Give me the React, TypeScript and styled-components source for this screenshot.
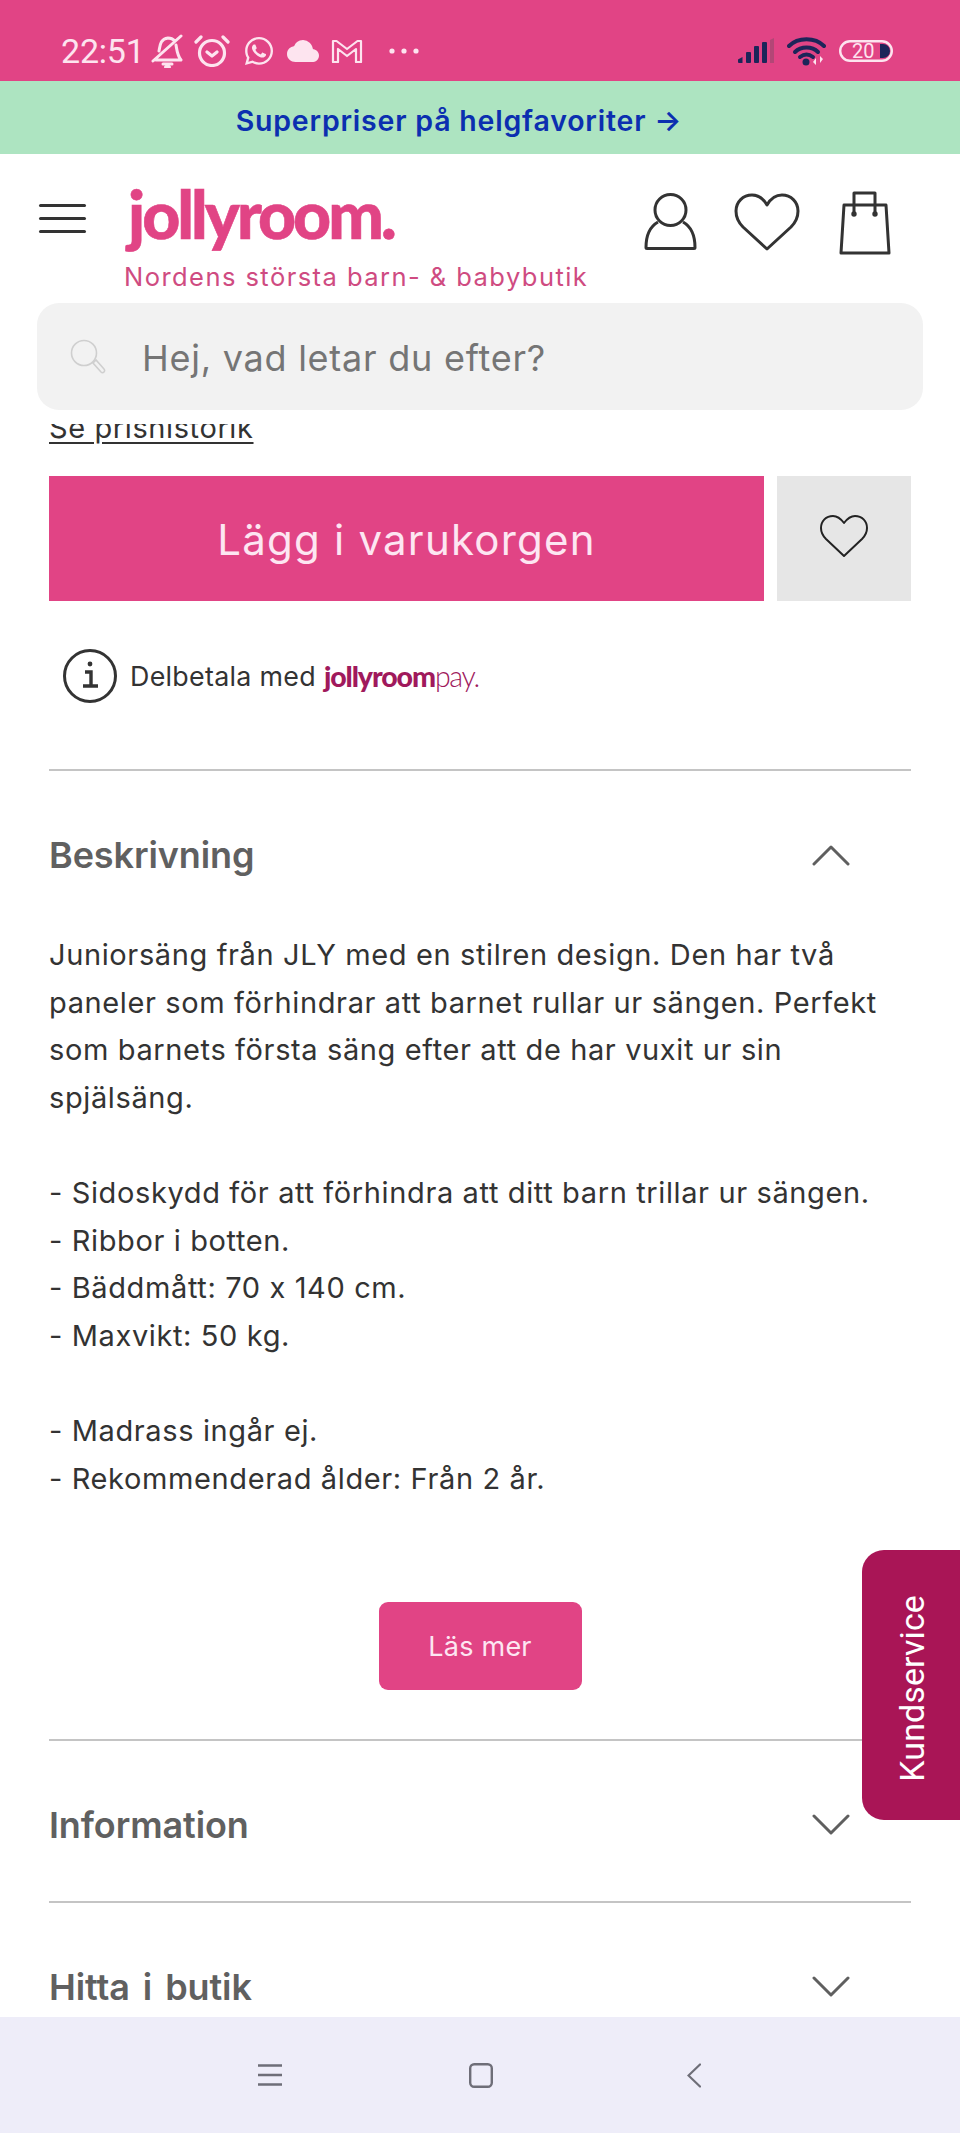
import React from "react";
import styled, { createGlobalStyle } from "styled-components";
import { FaWhatsapp } from "react-icons/fa";
import { IoCloud } from "react-icons/io5";

const Global = createGlobalStyle`
  html, body { margin: 0; padding: 0; background: #fff; }
  * { box-sizing: border-box; }
`;
const pink = "#e14485";
const body = `"Inter", "Liberation Sans", sans-serif`;

const Page = styled.div`
  position: relative; width: 960px; height: 2133px; overflow: hidden;
  display: flex; flex-direction: column; background: #fff; font-family: ${body};
`;
const StatusBar = styled.div`
  height: 81px; flex: none; background: ${pink}; display: flex; align-items: center;
  padding: 22px 67px 0 61px; color: #fde4ef;
`;
const Time = styled.span`
  font-family: Roboto, sans-serif; font-size: 34px; line-height: 1; width: 85px; margin-top: -2px; letter-spacing: -0.2px;
`;
const StatusIcons = styled.div`
  display: flex; align-items: center; margin-top: -2px; flex: 1;
`;
const StatusIcon = styled.span<{ $gap: number }>`
  display: flex; margin-left: ${(p) => p.$gap}px;
`;
const SystemIcons = styled.div`
  display: flex; align-items: center; gap: 12px; margin-top: -2px;
`;
const Promo = styled.div`
  height: 73px; flex: none; background: #ade4c1; color: #0b2fb0; display: flex; align-items: center; justify-content: center;
  font-weight: 600; font-size: 28.5px; padding: 5px 42px 0 0; letter-spacing: 0.8px;
`;
const Header = styled.header`
  flex: none; height: 270px; padding: 0 37px 14px; background: #fff; display: flex; flex-direction: column;
`;
const HeaderRow = styled.div`
  height: 149px; flex: none; display: flex; align-items: flex-start; margin-left: 2px;
`;
const Burger = styled.div`
  width: 47px; margin-top: 50px; flex: none; display: flex; flex-direction: column; gap: 10px;
`;
const BurgerBar = styled.span`
  height: 3px; background: #333; border-radius: 2px;
`;
const Brand = styled.div`
  margin-left: 38px; display: flex; flex-direction: column; width: 500px; flex: none;
`;
const Logo = styled.div`
  font-family: "Lato", sans-serif; font-weight: 900; font-size: 66px; line-height: 80px; color: ${pink};
  letter-spacing: -3px; margin: 20px 0 0 4px; height: 80px; -webkit-text-stroke: 0.6px ${pink};
`;
const Tagline = styled.div`
  font-size: 25.5px; line-height: 30px; color: #cf4b81; letter-spacing: 1.45px; margin-top: 8px; white-space: nowrap;
`;
const HeaderIcons = styled.div`
  display: flex; align-items: flex-start; margin-left: 20px; padding-top: 37px;
`;
const HeaderIcon = styled.span<{ $gap: number; $top: number }>`
  display: flex; margin-left: ${(p) => p.$gap}px; margin-top: ${(p) => p.$top}px;
`;
const Search = styled.div`
  height: 107px; flex: none; border-radius: 22px; background: #f2f2f2; display: flex; align-items: center; padding: 0 0 0 33px;
  width: 886px;
`;
const SearchText = styled.span`
  font-size: 36px; color: #757575; margin: 2px 0 0 36px; letter-spacing: 0.75px;
`;
const Main = styled.main`
  flex: 1; min-height: 0; overflow: hidden; padding: 0 49px; display: flex; flex-direction: column;
`;
const ClippedLinkBox = styled.div`
  height: 20px; flex: none; position: relative; overflow: hidden;
`;
const HistoryLink = styled.a`
  display: block; margin-top: -14px; font-size: 29px; line-height: 36px; color: #333; text-decoration: underline;
  text-underline-offset: 4px; letter-spacing: 0.6px; white-space: nowrap;
`;
const BuyRow = styled.div`
  display: flex; gap: 13px; margin-top: 32px; height: 125px; flex: none;
`;
const BuyButton = styled.div`
  width: 715px; background: ${pink}; color: #fde6f2; display: flex; align-items: center; justify-content: center;
  font-size: 42px; letter-spacing: 1.22px; padding-top: 1px;
`;
const WishButton = styled.div`
  width: 134px; background: #e6e6e6; display: flex; align-items: center; justify-content: center; padding-bottom: 6px;
`;
const PayRow = styled.div`
  display: flex; align-items: center; height: 53px; margin: 48px 0 0 14px; flex: none;
`;
const PayText = styled.span`
  font-size: 26.8px; color: #333; margin-left: 13px; letter-spacing: 0.3px;
`;
const PayLogo = styled.span`
  font-family: "Lato", sans-serif; font-weight: 900; font-size: 28.5px; color: #a0195c; margin-left: 8px; letter-spacing: -1.1px;
`;
const PayLight = styled.span`
  font-weight: 300; letter-spacing: -1.3px;
`;
const Rule = styled.div<{ $top: number }>`
  height: 2px; background: #c4c4c4; flex: none; margin-top: ${(p) => p.$top}px;
`;
const AccordionHead = styled.div<{ $height: number; $pad: number }>`
  height: ${(p) => p.$height}px; padding-top: ${(p) => p.$pad}px; display: flex; align-items: center; justify-content: space-between;
  flex: none; padding-right: 61px;
`;
const AccordionTitle = styled.h2`
  margin: 0; font-size: 36px; font-weight: 600; color: #606060; letter-spacing: -0.1px; word-spacing: 4px;
`;
const Description = styled.div`
  font-size: 29px; line-height: 47.6px; color: #333; white-space: nowrap; letter-spacing: 0.62px; padding-top: 2px;
`;
const ParaGap = styled.div`
  height: 47.6px;
`;
const ReadMore = styled.div`
  width: 203px; height: 88px; border-radius: 9px; background: ${pink}; color: #fde6f2; flex: none; align-self: center;
  display: flex; align-items: center; justify-content: center; font-size: 27px; margin-top: 100px; letter-spacing: 0.25px;
`;
const NavBar = styled.nav`
  height: 116px; flex: none; background: #eeedf9; display: flex; align-items: flex-start; padding: 46px 0 0 258px;
`;
const NavIcon = styled.span<{ $gap: number }>`
  display: flex; margin-left: ${(p) => p.$gap}px;
`;
const Service = styled.div`
  position: absolute; left: 862px; top: 1550px; width: 98px; height: 270px; background: #a91556; color: #fff;
  border-radius: 22px 0 0 22px; display: flex; align-items: center; justify-content: center; padding-top: 6px;
`;
const ServiceLabel = styled.span`
  font-family: Roboto, sans-serif; font-size: 34px; writing-mode: vertical-rl; transform: rotate(180deg); letter-spacing: 0.1px; padding-right: 1px;
`;

const Chevron = ({ up = false }: { up?: boolean }) => (
  <svg width="38" height="24" viewBox="0 0 38 24" fill="none" stroke="#5f5f5f" strokeWidth="3" strokeLinecap="round" strokeLinejoin="round">
    <path d={up ? "M2 21 19 4l17 17" : "M2 3l17 17L36 3"} />
  </svg>
);

export default function App() {
  return (
    <Page>
      <Global />
      <StatusBar>
        <Time>22:51</Time>
        <StatusIcons>
          <StatusIcon $gap={5}>
            <svg width="33" height="34" viewBox="0 0 33 34" fill="none" stroke="#fde4ef" strokeWidth="3" strokeLinecap="round" strokeLinejoin="round">
              <path d="M8 17c1-5 1-12 9-13 3 0 5 1 7 3M25 11c1 5 1 10 5 15H5M2 27 30 2" />
              <path d="M12 30h9M14.500 33h4" />
            </svg>
          </StatusIcon>
          <StatusIcon $gap={10}>
            <svg width="36" height="32" viewBox="0 0 36 32" fill="none" stroke="#fde4ef" strokeWidth="3.200" strokeLinecap="round" strokeLinejoin="round">
              <circle cx="18" cy="18" r="12.500" />
              <path d="M13 17l5 4 5-4M2 7l5-5M34 7l-5-5" />
            </svg>
          </StatusIcon>
          <StatusIcon $gap={13}>
            <FaWhatsapp size={32} color="#fde4ef" />
          </StatusIcon>
          <StatusIcon $gap={12}>
            <IoCloud size={32} color="#fde4ef" />
          </StatusIcon>
          <StatusIcon $gap={12}>
            <svg width="32" height="24" viewBox="0 0 32 24" fill="none" stroke="#fde4ef" strokeWidth="2.200" strokeLinejoin="round">
              <path d="M2 2h3.500L16 10 26.500 2H30v21h-5V10l-9 7-9-7v13H2z" />
            </svg>
          </StatusIcon>
          <StatusIcon $gap={25}>
            <svg width="32" height="8" viewBox="0 0 32 8" fill="#fde4ef">
              <circle cx="4" cy="4" r="2.600" />
              <circle cx="16" cy="4" r="2.600" />
              <circle cx="28" cy="4" r="2.600" />
            </svg>
          </StatusIcon>
        </StatusIcons>
        <SystemIcons>
          <svg width="38" height="27" viewBox="0 0 38 27">
            <g fill="#1d2559">
              <path d="M1 22.500 5.500 20v6H2a1 1 0 0 1-1-1z" />
              <rect x="9" y="15" width="5" height="11" rx="1" />
              <rect x="17" y="9" width="5" height="17" rx="1" />
              <rect x="25" y="5" width="5" height="21" rx="1" />
            </g>
            <path d="M33 3l4-2v25h-4z" fill="#a0476f" opacity=".7" />
          </svg>
          <svg width="40" height="30" viewBox="0 0 40 30" fill="none">
            <g stroke="#1d2559" strokeWidth="4" strokeLinecap="round">
              <path d="M2 10C11 1 28 1 37 10" />
              <path d="M8 16c6-6 17-6 23 0" />
              <path d="M13 21c4-3 9-3 13 0" />
            </g>
            <circle cx="19" cy="26" r="3.500" fill="#1d2559" />
            <path d="M29 22v7l-3-3zM33 20v7l3-4z" fill="#fde4ef" />
          </svg>
          <svg width="54" height="22" viewBox="0 0 54 22" fill="none">
            <rect x="1.200" y="1.200" width="51.600" height="19.600" rx="9.800" stroke="#fde4ef" strokeWidth="2.400" />
            <path d="M41 4h3a7 7 0 0 1 0 14h-3z" fill="#1d2559" />
            <text x="13" y="18" fontFamily="Roboto, sans-serif" fontSize="20" fill="#fde4ef">20</text>
          </svg>
        </SystemIcons>
      </StatusBar>
      <Promo>Superpriser på helgfavoriter →</Promo>
      <Header>
        <HeaderRow>
          <Burger>
            <BurgerBar />
            <BurgerBar />
            <BurgerBar />
          </Burger>
          <Brand>
            <Logo>jollyroom.</Logo>
            <Tagline>Nordens största barn- &amp; babybutik</Tagline>
          </Brand>
          <HeaderIcons>
            <HeaderIcon $gap={0} $top={2}>
              <svg width="53" height="58" viewBox="0 0 53 58" fill="none" stroke="#333" strokeWidth="3" strokeLinejoin="round">
                <circle cx="26.500" cy="17" r="15.500" />
                <path d="M14 29C7 33 2 42 2 54.500c0 .5.500 1 1 1h47c.5 0 1-.5 1-1C51 42 46 33 39 29" />
              </svg>
            </HeaderIcon>
            <HeaderIcon $gap={37} $top={2}>
              <svg width="66" height="58" viewBox="0 0 66 58" fill="none" stroke="#333" strokeWidth="3" strokeLinejoin="round">
                <path d="M33 12C37 5 42 2 48 2c9 0 16 7 16 16 0 6-2 11-7 16L33 56 9 34c-5-5-7-10-7-16C2 9 9 2 18 2c6 0 11 3 15 10z" />
              </svg>
            </HeaderIcon>
            <HeaderIcon $gap={39} $top={0}>
              <svg width="52" height="64" viewBox="0 0 52 64" fill="none" stroke="#333" strokeWidth="3" strokeLinejoin="round" strokeLinecap="round">
                <path d="M5 14h42l3 48H2z" />
                <path d="M15 23V2h21v21" />
                <circle cx="15" cy="23" r="1.200" />
                <circle cx="36" cy="23" r="1.200" />
              </svg>
            </HeaderIcon>
          </HeaderIcons>
        </HeaderRow>
        <Search>
          <svg width="36" height="36" viewBox="0 0 36 36" fill="none" stroke="#cfcfcf" strokeWidth="1.600">
            <circle cx="14" cy="14" r="12.500" />
            <path d="M23 24l3-3 8 9a2 2 0 0 1-3 3z" />
          </svg>
          <SearchText>Hej, vad letar du efter?</SearchText>
        </Search>
      </Header>
      <Main>
        <ClippedLinkBox>
          <HistoryLink>Se prishistorik</HistoryLink>
        </ClippedLinkBox>
        <BuyRow>
          <BuyButton>Lägg i varukorgen</BuyButton>
          <WishButton>
            <svg width="48" height="42" viewBox="0 0 48 42" fill="none" stroke="#222" strokeWidth="2" strokeLinejoin="round">
              <path d="M24 8c3-4 7-7 11-7 7 0 12 5 12 12 0 4-2 8-5 11L24 41 6 24c-3-3-5-7-5-11C1 6 6 1 13 1c4 0 8 3 11 7z" />
            </svg>
          </WishButton>
        </BuyRow>
        <PayRow>
          <svg width="54" height="54" viewBox="0 0 54 54" fill="none" stroke="#333">
            <circle cx="27" cy="27" r="25.500" strokeWidth="3" />
            <path d="M22 23h6v14M20 37h15" strokeWidth="3.400" />
            <circle cx="27" cy="15" r="2.400" fill="#333" stroke="none" />
          </svg>
          <PayText>Delbetala med</PayText>
          <PayLogo>
            jollyroom<PayLight>pay.</PayLight>
          </PayLogo>
        </PayRow>
        <Rule $top={67} />
        <AccordionHead $height={158} $pad={10}>
          <AccordionTitle>Beskrivning</AccordionTitle>
          <Chevron up />
        </AccordionHead>
        <Description>
          Juniorsäng från JLY med en stilren design. Den har två
          <br />
          paneler som förhindrar att barnet rullar ur sängen. Perfekt
          <br />
          som barnets första säng efter att de har vuxit ur sin
          <br />
          spjälsäng.
          <ParaGap />
          - Sidoskydd för att förhindra att ditt barn trillar ur sängen.
          <br />
          - Ribbor i botten.
          <br />
          - Bäddmått: 70 x 140 cm.
          <br />
          - Maxvikt: 50 kg.
          <ParaGap />
          - Madrass ingår ej.
          <br />
          - Rekommenderad ålder: Från 2 år.
        </Description>
        <ReadMore>Läs mer</ReadMore>
        <Rule $top={49} />
        <AccordionHead $height={160} $pad={8}>
          <AccordionTitle>Information</AccordionTitle>
          <Chevron />
        </AccordionHead>
        <Rule $top={0} />
        <AccordionHead $height={160} $pad={8}>
          <AccordionTitle>Hitta i butik</AccordionTitle>
          <Chevron />
        </AccordionHead>
      </Main>
      <NavBar>
        <NavIcon $gap={0}>
          <svg width="24" height="24" viewBox="0 0 24 24" fill="none" stroke="#6e6e78" strokeWidth="2.400">
            <path d="M0 2.500h24M0 12h24M0 21.500h24" />
          </svg>
        </NavIcon>
        <NavIcon $gap={187}>
          <svg width="24" height="25" viewBox="0 0 24 25" fill="none" stroke="#6e6e78" strokeWidth="2.400">
            <rect x="1.200" y="1.200" width="21.600" height="22.600" rx="4" />
          </svg>
        </NavIcon>
        <NavIcon $gap={194}>
          <svg width="14" height="25" viewBox="0 0 14 25" fill="none" stroke="#6e6e78" strokeWidth="2.200" strokeLinecap="round">
            <path d="M13 1.500 1.500 12.500 13 23.500" />
          </svg>
        </NavIcon>
      </NavBar>
      <Service>
        <ServiceLabel>Kundservice</ServiceLabel>
      </Service>
    </Page>
  );
}
